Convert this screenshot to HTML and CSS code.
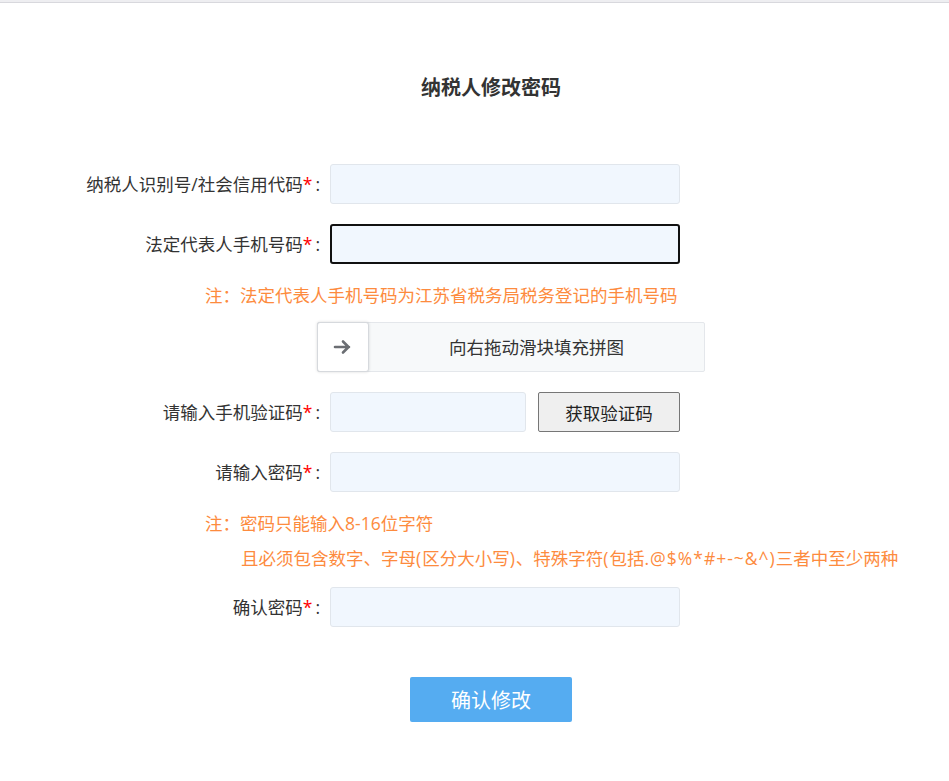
FILE: index.html
```html
<!DOCTYPE html>
<html lang="zh-CN">
<head>
<meta charset="utf-8">
<title>纳税人修改密码</title>
<link rel="stylesheet" href="styles.css">
</head>
<body>
<div class="topbar"></div>
<div class="page">
  <h1 class="title">纳税人修改密码</h1>
  <form class="form">
    <div class="row">
      <label class="label">纳税人识别号/社会信用代码<span class="req">*</span>:</label>
      <input class="input" type="text">
    </div>
    <div class="row">
      <label class="label">法定代表人手机号码<span class="req">*</span>:</label>
      <input class="input focused" type="text">
    </div>
    <p class="note note-first">注：法定代表人手机号码为江苏省税务局税务登记的手机号码</p>
    <div class="slider">
      <div class="handle">
        <svg width="20" height="18" viewBox="0 0 20 18"><path d="M2 9H16M10 3.5L15.5 9L10 14.5" fill="none" stroke="#6b6e73" stroke-width="2.6" stroke-linecap="round" stroke-linejoin="round"/></svg>
      </div>
      <div class="slider-text">向右拖动滑块填充拼图</div>
    </div>
    <div class="row">
      <label class="label">请输入手机验证码<span class="req">*</span>:</label>
      <input class="input input-short" type="text">
      <button class="code-btn" type="button">获取验证码</button>
    </div>
    <div class="row">
      <label class="label">请输入密码<span class="req">*</span>:</label>
      <input class="input" type="password">
    </div>
    <p class="note note-pwd">注：密码只能输入8-16位字符</p>
    <p class="note note-indent">且必须包含数字、字母<span class="lat">(</span>区分大小写<span class="lat">)</span>、特殊字符<span class="lat">(</span>包括<span class="lat">.@$%*#+-~&amp;^)</span>三者中至少两种</p>
    <div class="row">
      <label class="label">确认密码<span class="req">*</span>:</label>
      <input class="input" type="password">
    </div>
    <div class="submit-wrap">
      <button class="submit" type="button">确认修改</button>
    </div>
  </form>
</div>
</body>
</html>
```
FILE: styles.css
```css
* { box-sizing: border-box; }
html, body { margin: 0; padding: 0; background: #fff; }
body {
  font-family: "Open Sans", "Noto Sans CJK SC", sans-serif;
  color: #333;
  font-size: 17.5px;
}
.topbar {
  height: 3px;
  background: #eeeef1;
  border-bottom: 1px solid #d8d8dd;
}
.page { padding-left: 0; }
.title {
  margin: 71px 0 0 33px;
  height: 28px;
  line-height: 28px;
  font-size: 20px;
  font-weight: bold;
  text-align: center;
  color: #333;
}
.form { margin-top: 62px; }
.row {
  display: flex;
  align-items: center;
  height: 40px;
  margin-bottom: 20px;
}
.label {
  flex: 0 0 320px;
  text-align: right;
  line-height: 40px;
  color: #333;
  white-space: nowrap;
}
.req { color: #f00; margin-right: 3px; }
.input {
  margin-left: 10px;
  width: 350px;
  height: 40px;
  border: 1px solid #e1e6ec;
  border-radius: 3px;
  background: #f1f7fe;
  outline: none;
  font: inherit;
}
.input.focused { border: 2px solid #111; }
.input-short { width: 196px; }
.code-btn {
  margin-left: 12px;
  width: 142px;
  height: 40px;
  background: #efefef;
  border: 1px solid #767676;
  border-radius: 2px;
  font: inherit;
  color: #222;
  padding: 0;
}
.note {
  margin: 0;
  color: #fd8b3e;
  line-height: 26px;
  white-space: nowrap;
  padding-left: 205px;
}
.note-first { margin-top: -2px; }
.note-pwd { margin-top: -2px; }
.note-indent { margin-top: 9px; padding-left: 241px; margin-bottom: 16px; }
.lat { letter-spacing: 1px; }
.slider {
  margin: 14px 0 20px 317px;
  width: 388px;
  height: 50px;
  display: flex;
  background: #f7f9fa;
  border: 1px solid #e4e7eb;
  border-radius: 2px;
}
.handle {
  flex: 0 0 52px;
  height: 50px;
  margin: -1px 0 0 -1px;
  background: #fff;
  border: 1px solid #d6d9dd;
  border-radius: 3px;
  box-shadow: 0 0 3px rgba(0,0,0,0.15);
  display: flex;
  align-items: center;
  justify-content: center;
}
.slider-text {
  flex: 1;
  text-align: center;
  line-height: 48px;
  color: #333;
}
.submit-wrap {
  margin: 50px 0 0 33px;
  text-align: center;
}
.submit {
  width: 162px;
  height: 45px;
  background: #55acf1;
  color: #fff;
  border: none;
  border-radius: 2px;
  font: inherit;
  font-size: 20px;
  padding: 0;
}
```
